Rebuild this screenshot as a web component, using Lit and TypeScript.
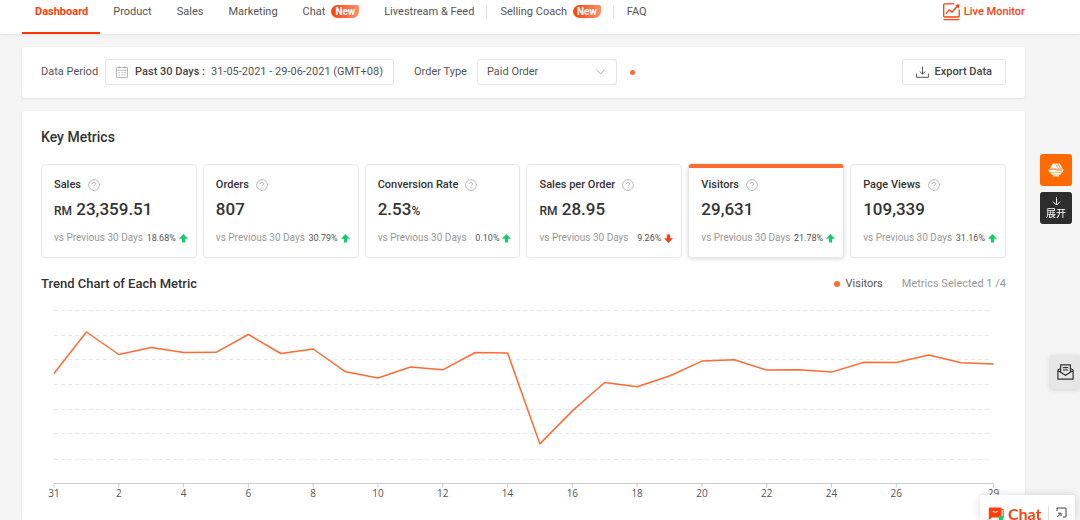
import { LitElement, html, svg, css, nothing } from "lit";
import { customElement, property, state } from "lit/decorators.js";
import { classMap } from "lit/directives/class-map.js";

interface Metric {
  name: string;
  value: string;
  prefix?: string;
  suffix?: string;
  change: string;
  down?: boolean;
}

interface NavItem {
  label: string;
  isNew?: boolean;
  divided?: boolean;
}

const NAV: NavItem[] = [
  { label: "Dashboard" },
  { label: "Product" },
  { label: "Sales" },
  { label: "Marketing" },
  { label: "Chat", isNew: true },
  { label: "Livestream & Feed" },
  { label: "Selling Coach", isNew: true, divided: true },
  { label: "FAQ", divided: true },
];

const METRICS: Metric[] = [
  { name: "Sales", prefix: "RM", value: "23,359.51", change: "18.68%" },
  { name: "Orders", value: "807", change: "30.79%" },
  { name: "Conversion Rate", value: "2.53", suffix: "%", change: "0.10%" },
  { name: "Sales per Order", prefix: "RM", value: "28.95", change: "9.26%", down: true },
  { name: "Visitors", value: "29,631", change: "21.78%" },
  { name: "Page Views", value: "109,339", change: "31.16%" },
];

// Height of the line above the axis for each day of the period.
const TREND = [
  110, 151.5, 129, 136, 131, 131.2, 149, 130, 134.5, 111.7, 105.5, 116.5, 113.7, 131, 130.4,
  39.6, 72.6, 101, 96.8, 107.5, 122.4, 123.8, 113.4, 113.8, 111.4, 121.2, 121, 128.4, 120.8, 119.4,
];

@customElement("metric-card")
export class MetricCard extends LitElement {
  @property({ attribute: false }) metric!: Metric;
  @property({ type: Boolean, reflect: true }) selected = false;

  static styles = css`
    :host { display: block; min-width: 0; }
    .card {
      box-sizing: border-box; display: flex; flex-direction: column; width: 100%; height: 94px;
      padding: 13px 8px 0 12px; border: 1px solid #e8e8e8; border-radius: 4px; background: #fff;
      font-family: inherit; color: #333; text-align: left; cursor: pointer;
      box-shadow: 0 1px 2px rgba(0, 0, 0, 0.02);
    }
    :host([selected]) .card {
      border-top: 4px solid #ff6b33; padding-top: 10px; box-shadow: 0 1px 4px rgba(0, 0, 0, 0.16);
    }
    .name { display: flex; align-items: center; gap: 7px; font-size: 11px; font-weight: 500; line-height: 14px; white-space: nowrap; }
    .value { height: 22px; margin-top: 6px; font-size: 17px; font-weight: 500; line-height: 22px; white-space: nowrap; }
    .small { font-size: 12px; line-height: 12px; }
    .foot { display: flex; align-items: center; margin-top: 10px; font-size: 10px; line-height: 16px; white-space: nowrap; }
    .vs { flex: 1; color: #999; }
    .change { font-size: 9px; color: #555; }
    .arrow { margin-left: 3px; fill: #13ce66; }
    .arrow.down { fill: #ff3d0d; transform: rotate(180deg); }
  `;

  render() {
    const m = this.metric;
    return html`
      <button class="card" type="button" aria-pressed=${this.selected}>
        <span class="name">${m.name}
          <svg width="12" height="12" viewBox="0 0 12 12" fill="none" stroke="#aaa" aria-hidden="true">
            <circle cx="6" cy="6" r="5.4" stroke-width=".8" />
            <path d="M4.5 4.9a1.5 1.5 0 1 1 2.2 1.3c-.5.3-.7.5-.7 1" stroke-width=".9" />
            <path d="M6 8.2v1" stroke-width=".9" />
          </svg>
        </span>
        <span class="value">${m.prefix ? html`<span class="small">${m.prefix}</span> ` : nothing}${m.value}${m.suffix ? html`<span class="small">${m.suffix}</span>` : nothing}</span>
        <span class="foot">
          <span class="vs">vs Previous 30 Days</span>
          <span class="change">${m.change}</span>
          <svg class=${classMap({ arrow: true, down: !!m.down })} width="9" height="9" viewBox="0 0 9 9" aria-hidden="true">
            <path d="M4.5 0 9 4.8H6.1V8.6H2.9V4.8H0Z" />
          </svg>
        </span>
      </button>`;
  }
}

@customElement("trend-chart")
export class TrendChart extends LitElement {
  static styles = css`
    :host { display: block; }
    .plot { display: block; width: 100%; height: auto; overflow: visible; }
    .grid { stroke: #e8e8e8; stroke-dasharray: 4 3; }
    .axis { stroke: #ccc; }
    .line { fill: none; stroke: #ff6b33; stroke-width: 1.5; stroke-linejoin: round; }
    .label { font-size: 10px; fill: #555; text-anchor: middle; font-family: "Open Sans", sans-serif; }
  `;

  render() {
    const left = 13;
    const right = 952.5;
    const base = 183.5;
    const step = (right - left) / (TREND.length - 1);
    const x = (i: number) => left + i * step;
    const points = TREND.map((v, i) => `${x(i).toFixed(1)},${(base - v).toFixed(1)}`).join(" ");
    const ticks = [0, 2, 4, 6, 8, 10, 12, 14, 16, 18, 20, 22, 24, 26, 29];
    return html`
      <svg class="plot" viewBox="0 0 965 200" role="img" aria-label="Visitors per day">
        ${[10.5, 35.5, 59.5, 84.5, 109.5, 133.5, 159.5].map(
          (y) => svg`<line class="grid" x1=${left} x2="950" y1=${y} y2=${y} />`
        )}
        <line class="axis" x1=${left} x2=${right} y1=${base} y2=${base} />
        ${ticks.map(
          (t) => svg`
            <line class="axis" x1=${x(t)} x2=${x(t)} y1=${base} y2=${base + 4} />
            <text class="label" x=${x(t)} y="197">${t === 0 ? 31 : t}</text>`
        )}
        <polyline class="line" points=${points} />
      </svg>`;
  }
}

@customElement("app-root")
export class AppRoot extends LitElement {
  @state() private selected = "Visitors";

  static styles = css`
    :host {
      display: flex; flex-direction: column; min-height: 100vh; background: #f5f5f5;
      font-family: Roboto, "Noto Sans CJK SC", sans-serif; font-size: 11px; line-height: 14px; color: #555;
    }
    button, select { font: inherit; color: inherit; cursor: pointer; }
    a { color: inherit; text-decoration: none; }
    .top {
      display: flex; align-items: flex-start; justify-content: space-between; height: 34px;
      padding: 0 55px 0 22px; background: #fff; box-shadow: 0 1px 3px rgba(0, 0, 0, 0.08);
    }
    .nav { display: flex; white-space: nowrap; }
    .link { box-sizing: border-box; display: flex; gap: 6px; height: 34px; padding: 5px 12px 0 13px; }
    .link.active { color: #ff3d0d; font-weight: 700; border-bottom: 2px solid #ff3300; }
    .divider { width: 1px; height: 12px; margin-top: 6px; background: #e0e0e0; }
    .badge {
      box-sizing: border-box; height: 13px; padding: 0 4px; border-radius: 7px 2px 7px 7px; font-size: 10px; font-weight: 700;
      line-height: 13px; color: #fff; background: linear-gradient(90deg, #ff4208, #ff8f6b);
    }
    .live { display: flex; gap: 4px; padding-top: 3px; font-weight: 500; line-height: 18px; color: #ff3d0d; }
    .main { flex: 1; display: flex; flex-direction: column; gap: 13px; padding: 13px 55px 0 22px; }
    .panel { background: #fff; border-radius: 3px; padding: 0 19px; box-shadow: 0 1px 3px rgba(0, 0, 0, 0.08); }
    .filters { display: flex; align-items: center; padding: 12px 19px 13px; white-space: nowrap; }
    .box {
      box-sizing: border-box; display: flex; align-items: center; height: 26px; border: 1px solid #e5e5e5;
      border-radius: 3px; background: #fff; padding: 0 10px;
    }
    .strong { font-weight: 500; color: #444; }
    .period { margin: 0 20px 0 7px; }
    .period .strong { margin: 0 6px 0 7px; }
    .picker { position: relative; display: flex; margin: 0 13px 0 10px; }
    .picker .box { width: 140px; padding: 0 9px; appearance: none; }
    .chevron { position: absolute; right: 12px; top: 10px; pointer-events: none; }
    .dot { width: 5px; height: 5px; border-radius: 50%; background: #ff6b33; }
    .export { margin-left: auto; padding: 0 13px; gap: 6px; font-weight: 500; color: #444; }
    .metrics { flex: 1; border-radius: 3px 3px 0 0; }
    h1, h2 { margin: 0; font-weight: 500; color: #333; }
    h1 { padding: 17px 0 18px; font-size: 14px; line-height: 18px; }
    h2 { font-size: 13px; line-height: 16px; }
    .cards { display: grid; grid-template-columns: repeat(6, minmax(0, 1fr)); gap: 6px; }
    .trend-head { display: flex; align-items: center; padding: 18px 0 8px; }
    .legend { display: flex; align-items: center; gap: 6px; margin-left: auto; }
    .legend .dot { width: 6px; height: 6px; }
    .picked { margin-left: 19px; color: #999; }
    .side { position: fixed; right: 8px; top: 154px; display: flex; flex-direction: column; gap: 6px; }
    .tool {
      display: flex; flex-direction: column; align-items: center; justify-content: center; gap: 2px; width: 32px; height: 32px;
      padding: 0; border: 0; border-radius: 3px; background: #ff6a00; color: #fff; font-size: 10px; line-height: 12px;
    }
    .tool.dark { background: #2d2d2d; }
    .mail {
      position: fixed; right: 0; top: 355px; display: flex; align-items: center; justify-content: center; width: 30px; height: 34px;
      padding: 0; border: 0; border-radius: 3px 0 0 3px; background: #e6e6e6; box-shadow: 0 1px 5px rgba(0, 0, 0, 0.15);
    }
    .chat {
      position: fixed; right: 5px; bottom: 0; box-sizing: border-box; display: flex; align-items: flex-start; width: 95px; height: 25px;
      padding: 9px 8px 0 8px; border: 0; border-radius: 3px 3px 0 0; background: #fff; box-shadow: 0 0 8px rgba(0, 0, 0, 0.15);
    }
    .chat-icon { height: 16px; }
    .chat-name { flex: 1; margin: 4px 0 0 4px; font-family: Lato, sans-serif; font-size: 16px; font-weight: 700; line-height: 12px; color: #ff3d0d; text-align: left; }
    .chat .divider { height: 14px; margin: 2px 7px 0 0; }
    .expand { margin-top: 3px; }
  `;

  render() {
    return html`
      <header class="top">
        <nav class="nav">
          ${NAV.map(
            (n, i) => html`
              ${n.divided ? html`<span class="divider"></span>` : nothing}
              <a class=${classMap({ link: true, active: i === 0 })} href="#">${n.label}${n.isNew ? html`<span class="badge">New</span>` : nothing}</a>`
          )}
        </nav>
        <a class="live" href="#">
          <svg width="17" height="18" viewBox="0 0 17 18" fill="none" stroke="#ff3d0d" stroke-width="1.3" aria-hidden="true">
            <path d="M11 .8H1.7Q.7.8.7 1.8V13Q.7 14 1.7 14H15.2Q16.2 14 16.2 13V6.5M.5 16.6H16.4" />
            <path d="M3 10.6 6.2 6.8 9 9 14.6 3" /><path d="M12 2 16.6 1.2 15.6 5.6Z" fill="#ff3d0d" stroke="none" />
          </svg>
          Live Monitor
        </a>
      </header>

      <main class="main">
        <section class="panel filters">
          <span id="period-label">Data Period</span>
          <button class="box period" type="button" aria-labelledby="period-label period-value">
            <svg width="12" height="12" viewBox="0 0 12 12" fill="none" stroke="#aaa" stroke-width=".8" aria-hidden="true">
              <path d="M.5 1.5h11v10H.5ZM.5 4.3h11M3.2 0v2.6M8.8 0v2.6" />
              <path d="M2.5 6.6h7M2.5 9h7" stroke-dasharray="1.4 1.4" />
            </svg>
            <span class="strong">Past 30 Days :</span>
            <span id="period-value">31-05-2021 - 29-06-2021 (GMT+08)</span>
          </button>
          <label for="order-type">Order Type</label>
          <span class="picker">
            <select class="box" id="order-type">
              <option>Paid Order</option>
            </select>
            <svg class="chevron" width="9" height="6" viewBox="0 0 9 6" fill="none" stroke="#aaa" aria-hidden="true"><path d="M.5.7 4.5 4.9 8.5.7" /></svg>
          </span>
          <span class="dot"></span>
          <button class="box export" type="button">
            <svg width="13" height="12" viewBox="0 0 13 12" fill="none" stroke="#555" aria-hidden="true">
              <path d="M.6 7.5v3.8h11.8V7.5M6.5.5v7.6M3.7 5.4l2.8 2.8 2.8-2.8" />
            </svg>
            Export Data
          </button>
        </section>

        <section class="panel metrics">
          <h1>Key Metrics</h1>
          <div class="cards">
            ${METRICS.map(
              (m) => html`<metric-card .metric=${m} ?selected=${m.name === this.selected} @click=${() => (this.selected = m.name)}></metric-card>`
            )}
          </div>
          <div class="trend-head">
            <h2>Trend Chart of Each Metric</h2>
            <span class="legend"><span class="dot"></span>${this.selected}</span>
            <span class="picked">Metrics Selected 1 /4</span>
          </div>
          <trend-chart></trend-chart>
        </section>
      </main>

      <div class="side">
        <button class="tool" type="button" aria-label="Assistant">
          <svg width="16" height="14" viewBox="0 0 16 14" aria-hidden="true">
            <path d="M1.6 5.8 4.2 1.4Q4.8.4 5.8.4H11.8L14.6 5.8Z" fill="#fff" />
            <path d="M7.2.2 10.4 5.8M9.6.2 12.8 5.8" stroke="#ff6a00" stroke-width=".7" />
            <path d="M.2 6.4H15.8L14.4 9.4H1.6ZM2.4 9.9H13.6L12.2 11.8H3.8ZM5 12.3H11V13.6H5Z" fill="#fff" />
            <path d="M1.4 6.1H6.6L8.6 7.4H14.4" fill="none" stroke="#ff6a00" stroke-width=".6" />
          </svg>
        </button>
        <button class="tool dark" type="button">
          <svg width="9" height="9" viewBox="0 0 9 9" fill="none" stroke="#fff" aria-hidden="true"><path d="M4.5 0v8M1 4.6l3.5 3.5L8 4.6" /></svg>
          展开
        </button>
      </div>

      <button class="mail" type="button" aria-label="Messages">
        <svg width="17" height="16" viewBox="0 0 17 16" fill="none" stroke="#333" stroke-width="1.2" aria-hidden="true">
          <path d="M3.5 4.4.9 6V15.2H16.1V6L13.5 4.4M.9 6.5 8.5 11.3 16.1 6.5" />
          <path d="M3.6 8V.8H13.4V8M5.8 3.6h5.4M5.8 6h5.4" />
        </svg>
      </button>

      <button class="chat" type="button">
        <svg class="chat-icon" width="16" viewBox="0 0 16 16" aria-hidden="true">
          <path d="M1.2 3.5H12.6Q13.6 3.5 13.6 4.5V13.5H4L.8 16V4.5Q.8 3.5 1.2 3.5Z" fill="#ff3d0d" />
          <path d="M13.8 5.5h1.4V14" fill="none" stroke="#ff3d0d" />
          <path d="M4.6 7.4Q7.2 9.2 9.8 7.4" fill="none" stroke="#fff" stroke-width="1" />
          <circle cx="13" cy="14" r="2.4" fill="#13ce66" />
        </svg>
        <span class="chat-name">Chat</span>
        <span class="divider"></span>
        <svg class="expand" width="11" height="11" viewBox="0 0 11 11" fill="none" stroke="#444" aria-hidden="true">
          <path d="M1 4V1H10V10H7M1.2 10 4.6 6.6M2 6.2H5V9.2" />
        </svg>
      </button>
    `;
  }
}
